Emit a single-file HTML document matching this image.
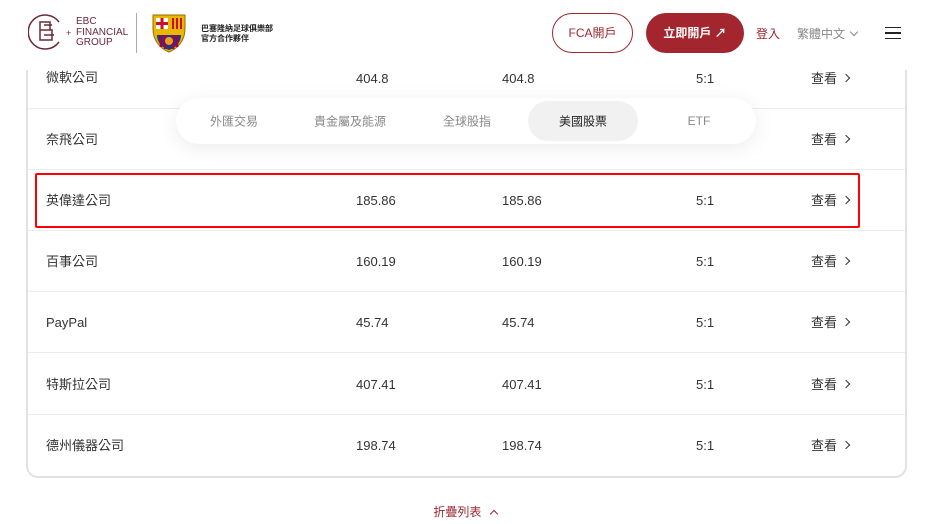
<!DOCTYPE html>
<html><head><meta charset="utf-8"><style>
*{margin:0;padding:0;box-sizing:border-box}
body{width:930px;height:524px;overflow:hidden;background:#fff;font-family:"Liberation Sans","Noto Sans CJK TC",sans-serif;position:relative;color:#333}
.card{position:absolute;left:26px;top:0;width:881px;height:478px;border:2px solid #e2e2e2;border-top:none;border-radius:0 0 12px 12px}
.row{position:absolute;left:28px;width:877px;height:61px;border-bottom:1px solid #ececec;font-size:13px;color:#333}
.row span{position:absolute;top:22px;height:18px;line-height:18px;white-space:nowrap}
.n{left:18px}.a{left:328px}.b{left:474px}.c{left:668px}.v{left:783px}
.v:after{content:"";display:inline-block;width:5px;height:5px;border-right:1px solid #333;border-top:1px solid #333;transform:rotate(45deg);margin-left:6px;vertical-align:2px}
.hdr{position:absolute;left:0;top:0;width:930px;height:70px;background:#fff}
.tabs{position:absolute;left:176px;top:98px;width:580px;height:46px;background:#fff;border-radius:23px;box-shadow:0 4px 20px rgba(0,0,0,.08);font-size:12px;color:#888}
.tabs span{position:absolute;top:50%;transform:translate(-50%,-50%);white-space:nowrap}
.act{position:absolute;left:352px;top:3px;width:110px;height:40px;background:#f1f1f1;border-radius:20px}
.red{position:absolute;left:35px;top:173px;width:825px;height:55px;border:2.5px solid #f00;border-radius:2px}
</style></head><body>
<div class="card"></div>
<div class="row" style="top:48px"><span class="n" style="top:21px">微軟公司</span><span class="a">404.8</span><span class="b">404.8</span><span class="c">5:1</span><span class="v">查看</span></div>
<div class="row" style="top:109px"><span class="n">奈飛公司</span><span class="v">查看</span></div>
<div class="row" style="top:170px"><span class="n">英偉達公司</span><span class="a">185.86</span><span class="b">185.86</span><span class="c">5:1</span><span class="v">查看</span></div>
<div class="row" style="top:231px"><span class="n">百事公司</span><span class="a">160.19</span><span class="b">160.19</span><span class="c">5:1</span><span class="v">查看</span></div>
<div class="row" style="top:292px"><span class="n">PayPal</span><span class="a">45.74</span><span class="b">45.74</span><span class="c">5:1</span><span class="v">查看</span></div>
<div class="row" style="top:354px"><span class="n">特斯拉公司</span><span class="a">407.41</span><span class="b">407.41</span><span class="c">5:1</span><span class="v">查看</span></div>
<div class="row" style="top:415px;border-bottom:none"><span class="n">德州儀器公司</span><span class="a">198.74</span><span class="b">198.74</span><span class="c">5:1</span><span class="v">查看</span></div>
<div class="red"></div>
<div class="tabs"><div class="act"></div>
<span style="left:58px">外匯交易</span><span style="left:174px">貴金屬及能源</span><span style="left:291px">全球股指</span><span style="left:407px;color:#222">美國股票</span><span style="left:523px">ETF</span></div>
<div style="position:absolute;left:0;top:503px;width:930px;text-align:center;font-size:12px;color:#9b2730">折疊列表 <span style="display:inline-block;width:6px;height:6px;border-left:1.2px solid #9b2730;border-top:1.2px solid #9b2730;transform:rotate(45deg);margin-left:6px;vertical-align:-1px"></span></div>
<div class="hdr">
<svg style="position:absolute;left:28px;top:13px" width="38" height="38" viewBox="0 0 38 38" fill="none" stroke="#6b2a36" stroke-width="1.5"><path d="M31 9A17 17 0 1 0 31 29"/><path d="M12 9h10v8H12zM12 17h12v10H12z"/><path d="M16 12h8M16 22h10"/></svg>
<span style="position:absolute;left:66px;top:28px;color:#6b2a36;font-size:9px">+</span>
<div style="position:absolute;left:76px;top:17px;color:#6b2a36;font-size:10px;line-height:10.5px">EBC<br>FINANCIAL<br>GROUP</div>
<div style="position:absolute;left:136px;top:13px;width:1px;height:40px;background:#aaa"></div>
<svg style="position:absolute;left:150px;top:13px" width="38" height="40" viewBox="0 0 38 40"><path d="M3 2h32v14c0 12-8 20-16 23C11 36 3 28 3 16z" fill="#e8b800" stroke="#9a6b00"/><rect x="6" y="5" width="12" height="11" fill="#fff"/><path d="M12 5v11M6 10.5h12" stroke="#c8102e" stroke-width="3"/><path d="M21 5h11v11H21z" fill="#e8b800"/><path d="M23 5v11M27 5v11M31 5v11" stroke="#c8102e" stroke-width="2"/><rect x="6" y="17" width="26" height="4" fill="#e8b800"/><path d="M7 22h24c0 8-6 13-12 15C13 35 7 30 7 22z" fill="#1a3a8a"/><path d="M11 22v12M15 22v14M23 22v14M27 22v12" stroke="#a50044" stroke-width="2.5"/><circle cx="19" cy="28" r="4" fill="#e8a020"/></svg>
<div style="position:absolute;left:201px;top:24px;font-size:8px;font-weight:bold;line-height:10px;color:#222">巴塞隆納足球俱樂部<br>官方合作夥伴</div>
<div style="position:absolute;left:552px;top:13px;width:81px;height:40px;border:1px solid #a3262f;border-radius:20px;color:#a3262f;font-size:12px;text-align:center;line-height:38px">FCA開戶</div>
<div style="position:absolute;left:646px;top:13px;width:98px;height:40px;background:#a3262f;border-radius:20px;color:#fff;font-size:12px;font-weight:bold;text-align:center;line-height:40px">立即開戶 ↗</div>
<div style="position:absolute;left:756px;top:25px;font-size:12px;color:#a3262f">登入</div>
<div style="position:absolute;left:797px;top:25px;font-size:12px;color:#888">繁體中文 <span style="display:inline-block;width:6px;height:6px;border-right:1px solid #888;border-bottom:1px solid #888;transform:rotate(45deg);vertical-align:3px;margin-left:3px"></span></div>
<div style="position:absolute;left:885px;top:27px;width:16px;height:12px;border-top:1.5px solid #222;border-bottom:1.5px solid #222"><div style="margin-top:4px;height:1.5px;background:#222"></div></div>
</div>
</body></html>
